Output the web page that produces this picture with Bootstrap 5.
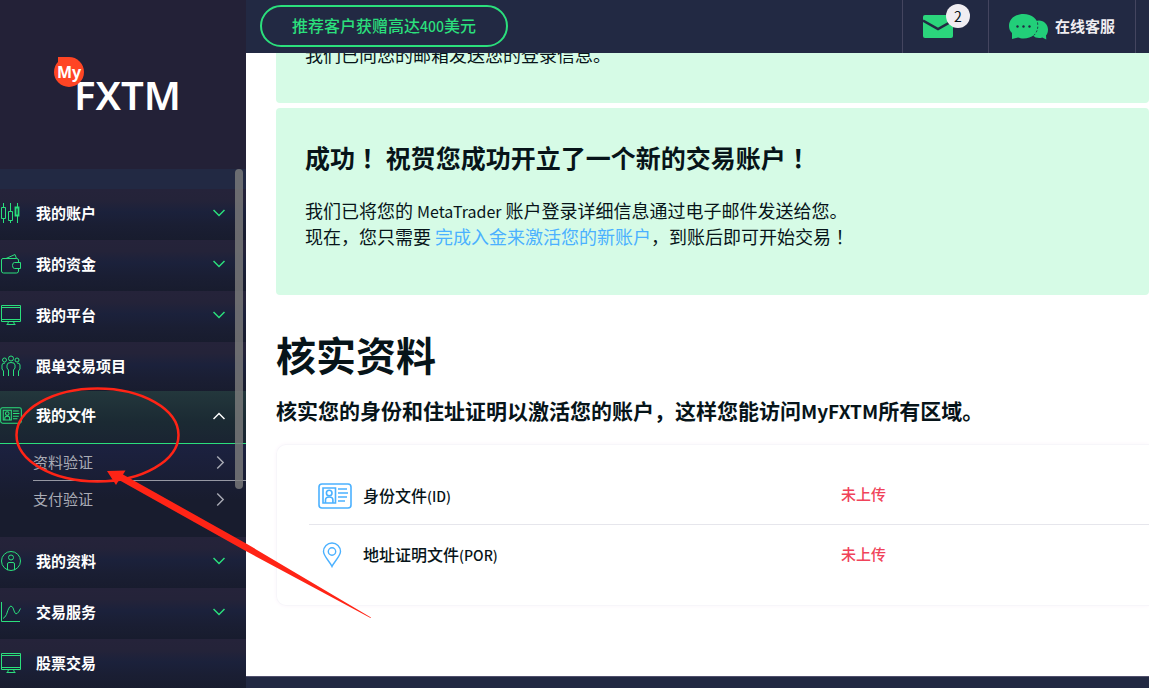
<!DOCTYPE html>
<html lang="zh-CN">
<head>
<meta charset="utf-8">
<meta name="viewport" content="width=device-width, initial-scale=1">
<title>MyFXTM</title>
<link href="https://cdn.jsdelivr.net/npm/bootstrap@5.3.0/dist/css/bootstrap.min.css" rel="stylesheet">
<style>
  :root { --navy: #222943; --deep: #232137; --green: #2bdf7c; --sky: #4bb1ff; --ink: #071419; }
  body { font-family: "Noto Sans CJK SC", "Noto Sans", sans-serif; color: var(--ink); }
  a { text-decoration: none; }
  svg { display: block; flex: none; }
  .line-art { fill: none; stroke: currentColor; }

  .side { width: 246px; background: var(--deep); }
  .logo-box { height: 169px; padding: 53px 0 0 52px; }
  .side-scroll { background: var(--navy); padding-top: 20px; }
  .side-item { height: 51px; font-size: 15px; font-weight: 700; color: #fff; padding: 0 21px 3px 0;
    background: linear-gradient(#25233a 0, #242339 22%, #1b213b 45%, #1a1e33 72%, #181c2e 100%); }
  .side-item .ico { color: var(--green); width: 36px; }
  .side-item .chev { color: var(--green); }
  .side-item.open { height: 53px; margin-top: -2px; background: linear-gradient(#23373c, #1b2a33 60%, #1a2432); border-bottom: 1px solid var(--green); }
  .side-item.open .chev { color: #fff; }
  .sub-menu { background: linear-gradient(#1c2140, #181c2e 60%); padding: 0 0 20px 33px; }
  .sub-item { height: 36px; font-size: 15px; color: #a9abb5; padding-right: 21px; }
  .sub-item + .sub-item { height: 37px; border-top: 1px solid #9698a3; }
  .thumb { top: 169px; right: 3px; width: 8px; height: 320px; border-radius: 4px; background: rgba(125,125,125,.8); }

  .top-bar { height: 53px; background: var(--navy); padding: 0 13px 0 14px; }
  .promo { height: 42px; margin-top: 5px; padding: 0 30px; font-size: 16px; font-weight: 500; line-height: 36px; color: var(--green); border: 2px solid var(--green); border-radius: 21px; }
  .promo:hover { color: #fff; border-color: #fff; }
  .top-cell { border-left: 1px solid #44455f; padding: 0 20px; gap: 7px; color: #f0edf1; font-size: 15px; font-weight: 700; }
  .top-cell.mail { width: 86px; }
  .top-cell:last-child { border-right: 1px solid #44455f; }
  .mail-count { top: 4px; left: 43px; width: 24px; height: 24px; background: #f0edf1; color: var(--ink); font-size: 14px; font-weight: 400; }

  .page { padding-left: 30px; }
  .notice { background: #d6fbe6; border-radius: 4px; padding: 33px 30px 46px 29px; font-size: 18px; line-height: 26px; margin-bottom: 35px; }
  .notice.scrolled { margin: -12px 0 5px; padding: 0 30px 36px 29px; }
  .notice h2 { font-size: 25px; font-weight: 700; line-height: 32px; margin-bottom: 24px; }
  .notice a { color: var(--sky); }
  .mid { font-family: "Noto Sans CJK TC", sans-serif; }
  .lat-14 { font-size: 14px; line-height: 1; }
  .lat-16 { font-size: 16px; line-height: 1; }
  .lat-19 { font-size: 19px; line-height: 1; }
  .page h1 { font-size: 40px; line-height: 48px; font-weight: 700; margin-bottom: 18px; }
  .page h3 { font-size: 21px; line-height: 28px; font-weight: 700; margin-bottom: 20px; }
  .docs { padding: 20px 0 22px 32px; border: 1px solid #f7f6fa; border-right: 0; border-radius: 10px 0 0 10px; box-shadow: 0 0 4px #fbf4fb; }
  .doc-row { display: grid; grid-template-columns: 19fr 11fr; align-items: center; height: 59px; font-size: 16px; font-weight: 500; color: var(--ink); }
  .doc-row + .doc-row { border-top: 1px solid #e6e6ec; }
  .doc-row .ico { width: 54px; padding: 2px 0 0 9px; color: var(--sky); }
  .doc-row .state { font-size: 15px; color: #f0435a; }
  .foot { height: 12px; background: var(--navy); border-top: 1px solid #50506c; }
  .pointer { left: 0; top: 380px; pointer-events: none; z-index: 5; }
</style>
</head>
<body>
<svg width="0" height="0" class="position-absolute" aria-hidden="true">
  <symbol id="down" viewBox="0 0 12 8"><path d="M.5 1 6 6.500 11.500 1" fill="none" stroke="currentColor" stroke-width="1.500"/></symbol>
  <symbol id="right" viewBox="0 0 8 12"><path d="M1 .5 6.500 6 1 11.500" fill="none" stroke="currentColor" stroke-width="1.300"/></symbol>
  <symbol id="screen" viewBox="0 0 22 22"><path d="M1.500 1.500h19v16h-19zM1.500 3.500h19M1.500 15.500h19M8.500 17.500l-1 3M13.500 17.500l1 3M6.500 20.500h9" fill="none" stroke="currentColor"/></symbol>
  <symbol id="card-id" viewBox="0 0 34 26"><g fill="none" stroke="currentColor" stroke-width="1.600"><rect x="1" y="1" width="32" height="24" rx="3"/><path d="M5 5h12.500v15H5zM20 6h9M20 10h10M20 14h9M20 18h7"/><circle cx="11.200" cy="10" r="2.800"/><path d="M7.500 20v-3q0-3 3.700-3t3.700 3v3"/></g></symbol>
</svg>

<div class="d-flex vh-100 overflow-hidden position-relative">
  <aside class="side flex-shrink-0 position-relative overflow-hidden">
    <div class="logo-box">
      <a href="#" aria-label="MyFXTM">
        <svg width="140" height="80" viewBox="0 0 140 80">
          <text x="22" y="57" font-family="Noto Sans" font-weight="600" font-size="40" fill="#fff">FXTM</text>
          <path d="M6 4H17v15H6z" fill="#ff4524"/>
          <circle cx="17" cy="19" r="15" fill="#ff4524"/>
          <text x="5" y="25" font-family="Noto Sans" font-weight="700" font-size="16" fill="#fff">My</text>
        </svg>
      </a>
    </div>
    <nav class="side-scroll">
      <a href="#" class="side-item d-flex align-items-center"><span class="ico"><svg class="line-art" width="21" height="22" viewBox="0 0 21 22"><path d="M3.500 1v4M3.500 17v4M1.500 5.500h4v11h-4zM10.500 1v8M10.500 19v2M8.500 9.500h4v9h-4zM17.500 1v4M17.500 14v7"/><path d="M15.500 5.500h3v8h-3z" stroke-width="1.800"/></svg></span><span class="flex-grow-1">我的账户</span><svg class="chev" width="12" height="8"><use href="#down"/></svg></a>
      <a href="#" class="side-item d-flex align-items-center"><span class="ico"><svg class="line-art" width="22" height="22" viewBox="0 0 22 22"><path d="M18.500 9V7q0-1.500-2-1.500H3q-1.500 0-1.500 1.500v11q0 2 2 2h13q2 0 2-2v-2M20.500 9.500h-6q-2 0-2 3t2 3h6zM6 5.500l9-4 1.500 4"/></svg></span><span class="flex-grow-1">我的资金</span><svg class="chev" width="12" height="8"><use href="#down"/></svg></a>
      <a href="#" class="side-item d-flex align-items-center"><span class="ico"><svg width="22" height="22"><use href="#screen"/></svg></span><span class="flex-grow-1">我的平台</span><svg class="chev" width="12" height="8"><use href="#down"/></svg></a>
      <a href="#" class="side-item d-flex align-items-center"><span class="ico"><svg class="line-art" width="22" height="22" viewBox="0 0 22 22"><circle cx="4.500" cy="5" r="2"/><circle cx="11" cy="3.500" r="2.500"/><circle cx="17" cy="5" r="2"/><path d="M3.500 21v-5l-1.500-2v-4q0-2 3-2M18.500 21v-5l1.500-2v-4q0-2-3-2M8.500 21v-6l-1.500-2V10q0-2.500 4-2.500t4 2.500v3l-1.500 2v6"/></svg></span><span class="flex-grow-1">跟单交易项目</span></a>
      <a href="#" class="side-item open d-flex align-items-center"><span class="ico"><svg width="22" height="17"><use href="#card-id"/></svg></span><span class="flex-grow-1">我的文件</span><svg class="chev" width="12" height="8" viewBox="0 0 12 8"><path class="line-art" d="M.5 7 6 1.500 11.500 7" stroke-width="1.500"/></svg></a>
      <div class="sub-menu">
        <a href="#" class="sub-item d-flex align-items-center justify-content-between">资料验证<svg width="9" height="13"><use href="#right"/></svg></a>
        <a href="#" class="sub-item d-flex align-items-center justify-content-between">支付验证<svg width="9" height="13"><use href="#right"/></svg></a>
      </div>
      <a href="#" class="side-item d-flex align-items-center"><span class="ico"><svg class="line-art" width="22" height="22" viewBox="0 0 22 22"><circle cx="11" cy="11" r="9.500"/><circle cx="11" cy="7.500" r="2.500"/><path d="M7.500 20v-6q0-1.500 1.500-1.500h4q1.500 0 1.500 1.500v6"/></svg></span><span class="flex-grow-1">我的资料</span><svg class="chev" width="12" height="8"><use href="#down"/></svg></a>
      <a href="#" class="side-item d-flex align-items-center"><span class="ico"><svg class="line-art" width="22" height="22" viewBox="0 0 22 22"><path d="M1.500 1v19.500H20M3 17.500q2-1 3.500-4Q9 5 11 5t3.500 6q2 5 6-3.500"/></svg></span><span class="flex-grow-1">交易服务</span><svg class="chev" width="12" height="8"><use href="#down"/></svg></a>
      <a href="#" class="side-item d-flex align-items-center"><span class="ico"><svg width="22" height="22"><use href="#screen"/></svg></span><span class="flex-grow-1">股票交易</span></a>
    </nav>
    <div class="thumb position-absolute"></div>
  </aside>

  <div class="d-flex flex-column flex-grow-1 overflow-hidden">
    <header class="top-bar d-flex flex-shrink-0">
      <a href="#" class="promo me-auto text-nowrap">推荐客户获赠高达<span class="lat-14">400</span>美元</a>
      <a href="#" class="top-cell mail d-flex align-items-center position-relative" aria-label="2">
        <svg width="30" height="24" viewBox="0 0 30 24"><rect y="0" width="30" height="23" rx="2" fill="#2bd57c"/><path d="M0 5.500 15 14 30 5.500" fill="none" stroke="#222943" stroke-width="2.500"/></svg>
        <span class="mail-count position-absolute rounded-circle d-flex align-items-center justify-content-center">2</span>
      </a>
      <a href="#" class="top-cell d-flex align-items-center">
        <svg width="39" height="26" viewBox="0 0 39 26"><g fill="#22cf79"><path d="M30 6.500c5 0 9 4 9 9 0 3-1 5-2 6l.3 4-4-2c-6 2-12-2-12-8s4-9 8.700-9z"/><path d="M14.500 0C23 0 29 5 29 12s-6 12.500-14.500 12.500c-2 0-4-.5-5.500-1L3 25V19C1 17 0 15 0 12 0 5 6 0 14.500 0z"/></g><path d="M28.500 8.500q1.500 9-5 14" fill="none" stroke="#222943" stroke-dasharray="2 2"/><g fill="#222943"><circle cx="8.500" cy="12.500" r="1.200"/><circle cx="14.500" cy="12.500" r="1.200"/><circle cx="20.500" cy="12.500" r="1.200"/></g></svg>
        <span>在线客服</span>
      </a>
    </header>

    <main class="page flex-grow-1 overflow-hidden">
      <div class="notice scrolled">我们已向您的邮箱发送您的登录信息。</div>
      <section class="notice">
        <h2>成功<span class="mid" lang="zh-TW">！</span> 祝贺您成功开立了一个新的交易账户<span class="mid" lang="zh-TW">！</span></h2>
        <p class="mb-0">我们已将您的 <span class="lat-16">MetaTrader</span> 账户登录详细信息通过电子邮件发送给您。<br>现在，您只需要 <a href="#">完成入金来激活您的新账户</a>，到账后即可开始交易<span class="mid" lang="zh-TW">！</span></p>
      </section>
      <h1>核实资料</h1>
      <h3>核实您的身份和住址证明以激活您的账户，这样您能访问<span class="lat-19">MyFXTM</span>所有区域。</h3>
      <div class="docs">
        <a href="#" class="doc-row"><span class="d-flex align-items-center"><span class="ico"><svg width="34" height="26"><use href="#card-id"/></svg></span><span>身份文件<span class="lat-14">(ID)</span></span></span><span class="state">未上传</span></a>
        <a href="#" class="doc-row"><span class="d-flex align-items-center"><span class="ico"><svg class="line-art ms-1" width="20" height="26" viewBox="0 0 20 26" stroke-width="1.400"><path d="M10 24.500C8 20 1.500 14 1.500 9.500a8.500 8.500 0 0 1 17 0C18.500 14 12 20 10 24.500z"/><circle cx="10" cy="9.500" r="3.700"/></svg></span><span>地址证明文件<span class="lat-14">(POR)</span></span></span><span class="state">未上传</span></a>
      </div>
    </main>
    <footer class="foot flex-shrink-0"></footer>
  </div>

  <svg class="pointer position-absolute" width="380" height="245" viewBox="0 0 380 245" aria-hidden="true">
    <ellipse cx="97.500" cy="55" rx="81" ry="46.500" fill="none" stroke="#ff2416" stroke-width="2.500"/>
    <path d="M107 91 125.500 90.500 123 94.500 247 164 371 237.500 370.500 238 244 170 119 100 116 105z" fill="#ff2416"/>
  </svg>
</div>
<script src="https://cdn.jsdelivr.net/npm/bootstrap@5.3.0/dist/js/bootstrap.bundle.min.js"></script>
</body>
</html>
